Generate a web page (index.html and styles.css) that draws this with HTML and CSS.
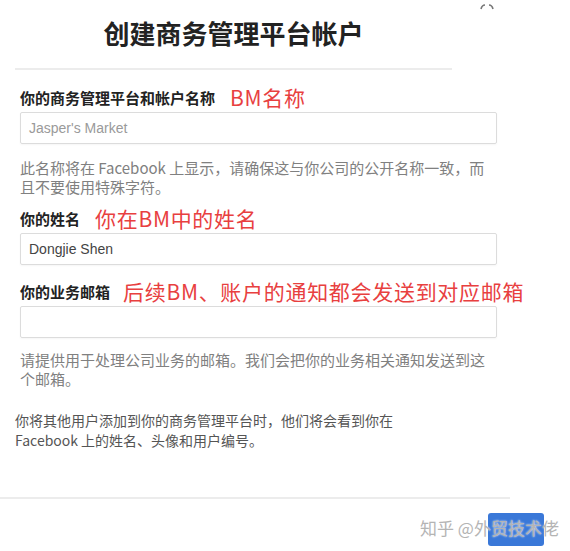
FILE: index.html
```html
<!DOCTYPE html>
<html lang="zh-CN">
<head>
  <meta charset="UTF-8">
  <meta name="viewport" content="width=device-width, initial-scale=1.0">
  <title>创建商务管理平台帐户</title>
  <link rel="stylesheet" href="styles.css">
</head>
<body>

  <div class="dialog">
    <svg class="close" width="14" height="8" viewBox="0 0 14 8">
      <path d="M1 6 Q2 2 5 2" />
      <path d="M9 2 Q12 2 13 6" />
    </svg>

    <div class="header">
      <div class="title">创建商务管理平台帐户</div>
    </div>

    <div class="form">
      <div class="label-row">
        <span class="label">你的商务管理平台和帐户名称</span>
        <span class="note">BM名称</span>
      </div>
      <div class="input placeholder">Jasper's Market</div>
      <div class="help">此名称将在 Facebook 上显示，请确保这与你公司的公开名称一致，而且不要使用特殊字符。</div>

      <div class="label-row second">
        <span class="label">你的姓名</span>
        <span class="note">你在BM中的姓名</span>
      </div>
      <div class="input">Dongjie Shen</div>

      <div class="label-row third">
        <span class="label">你的业务邮箱</span>
        <span class="note">后续BM、账户的通知都会发送到对应邮箱</span>
      </div>
      <div class="input"></div>
      <div class="help">请提供用于处理公司业务的邮箱。我们会把你的业务相关通知发送到这个邮箱。</div>
    </div>

    <div class="info">你将其他用户添加到你的商务管理平台时，他们将会看到你在<br>Facebook 上的姓名、头像和用户编号。</div>

    <div class="footer">
      <button class="button"></button>
      <span class="watermark">知乎 @外贸技术佬</span>
    </div>
  </div>

</body>
</html>
```

FILE: styles.css
```css
/* Basic styling */
body {
  margin: 0;
  background: #fff;
  font-family: "Liberation Sans", "Noto Sans CJK SC", sans-serif;
  color: #333;
}

.dialog {
  position: relative;
  width: 570px;
  height: 551px;
  overflow: hidden;
}

.close {
  position: absolute;
  top: 3px;
  left: 480px;
  fill: none;
  stroke: #777;
  stroke-width: 1.6;
}

/* Header */
.header {
  width: 437px;
  margin-left: 15px;
  padding-top: 15px;
  padding-bottom: 17px;
  border-bottom: 2px solid #ececec;
}

.title {
  text-align: center;
  font-family: "Noto Sans CJK SC", sans-serif;
  font-size: 26px;
  font-weight: 700;
  line-height: 36px;
  color: #222;
}

/* Form */
.form {
  width: 477px;
  margin-left: 20px;
  padding-top: 15px;
}

.label-row {
  display: flex;
  align-items: center;
  height: 24px;
  white-space: nowrap;
}

.label-row.second {
  margin-top: 10px;
}

.label-row.third {
  margin-top: 14px;
}

.label {
  flex-shrink: 0;
  font-family: "Noto Sans CJK SC", sans-serif;
  font-size: 15px;
  font-weight: 700;
  color: #222;
  margin-right: 15px;
}

.label-row.third .label {
  margin-right: 13px;
}

.note {
  flex-shrink: 0;
  font-family: "Noto Sans CJK SC", sans-serif;
  font-size: 21px;
  letter-spacing: 0.7px;
  color: #e8403f;
  line-height: 24px;
}

.input {
  box-sizing: border-box;
  height: 32px;
  margin-top: 3px;
  padding: 0 8px;
  border: 1px solid #dcdcdc;
  border-radius: 2px;
  box-shadow: 0 1px 2px rgba(0, 0, 0, 0.04);
  font-size: 14px;
  line-height: 30px;
  color: #444;
}

.placeholder {
  color: #9a9a9a;
}

.help {
  margin-top: 14px;
  font-family: "Noto Sans CJK SC", sans-serif;
  font-size: 15px;
  line-height: 19px;
  color: #808080;
  width: 472px;
}

.help:last-child {
  margin-top: 12px;
}

.info {
  margin: 22px 0 0 15px;
  font-family: "Noto Sans CJK SC", sans-serif;
  font-size: 14px;
  line-height: 20px;
  color: #555;
}

/* Footer */
.footer {
  position: relative;
  width: 510px;
  margin-top: 47px;
  padding-top: 14px;
  border-top: 2px solid #ececec;
}

.button {
  display: block;
  width: 56px;
  height: 33px;
  margin-left: 488px;
  border: none;
  border-radius: 3px;
  background: #3a78d8;
}

.watermark {
  position: absolute;
  left: 420px;
  top: 14px;
  font-family: "Noto Sans CJK SC", sans-serif;
  font-size: 17px;
  line-height: 30px;
  color: #b4b4b4;
  white-space: nowrap;
  text-shadow: 0 0 2px #fff;
}
```
